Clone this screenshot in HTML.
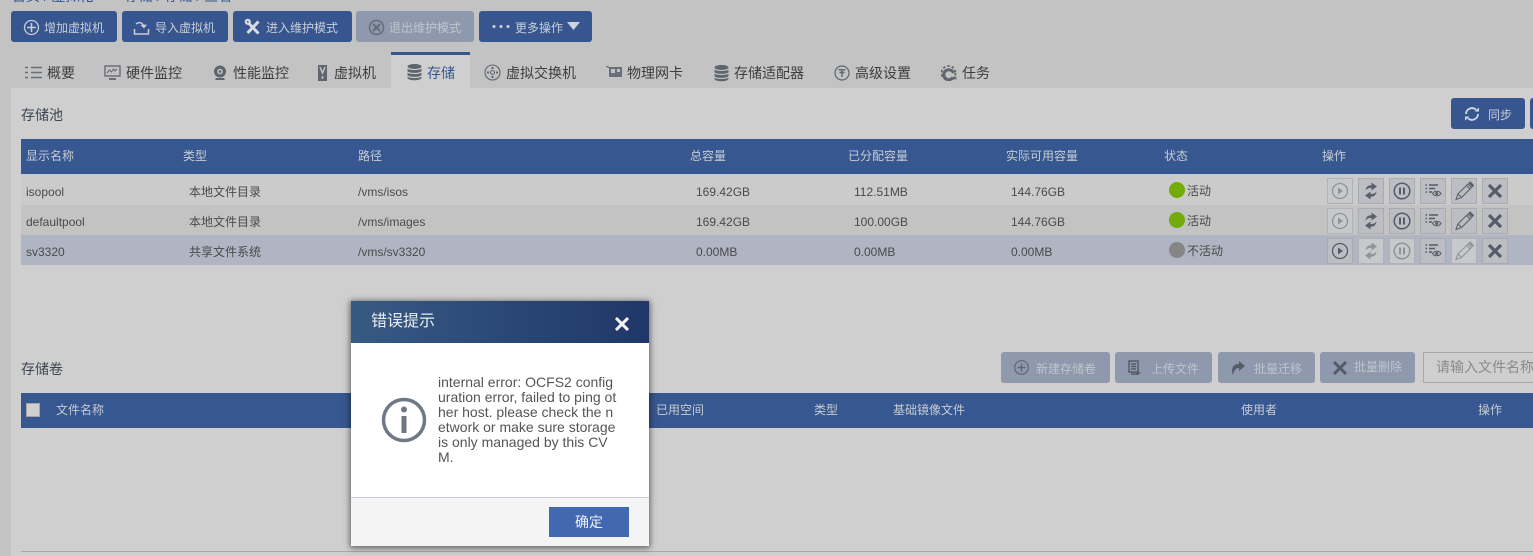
<!DOCTYPE html>
<html lang="zh"><head><meta charset="utf-8"><title>存储</title>
<style>
html,body{margin:0;padding:0}
body{width:1533px;height:556px;overflow:hidden;position:relative;background:#c3c3c3;font-family:"Liberation Sans","Noto Sans CJK SC",sans-serif;font-size:12px;color:#4a4a4a}
div,span,svg{position:absolute;box-sizing:border-box}
.t{white-space:nowrap;line-height:16px}
.btn{background:#37568f;border-radius:3px;height:31px;top:11px}
.btn.d{background:#8e99ad}
.bl{color:#c8ced9;font-size:12px}
.tab{font-size:14px;color:#3d3d3d;top:65px}
.th{color:#c8ccd4;font-size:12px;font-weight:400}
.ab{width:26px;height:26px;border:1px solid #a9abaf;background:#bcbec3}
.ab.l{background:#c8c9cb;border-color:#b0b2b5}
.ab svg{left:0;top:0;width:24px;height:24px}
.off{opacity:.5}
</style></head><body>
<div class="t" style="left:12px;top:-12px;color:#37568f;font-size:14px">首页 / 虚拟化 &nbsp;&nbsp;&nbsp;&nbsp;&nbsp;&nbsp;&nbsp;存储 / 存储 / 查看</div>

<div class="btn" style="left:11px;width:106px"></div>
<svg style="left:23px;top:19px" width="17" height="17" viewBox="0 0 17 17" fill="none" stroke="#c8ced9" stroke-width="1.3"><circle cx="8.5" cy="8.5" r="7"/><path d="M8.5 4v9M4 8.5h9" stroke-width="1.6"/></svg>
<div class="t bl" style="left:44px;top:20px">增加虚拟机</div>

<div class="btn" style="left:122px;width:106px"></div>
<svg style="left:133px;top:19px" width="17" height="17" viewBox="0 0 17 17" fill="none" stroke="#c8ced9" stroke-width="1.5"><path d="M1.5 10v5h14v-5M3 5c3-2.500 6-1.500 7.500 1.500"/><path d="M7.500 6l3.500 3.500 3-4z" fill="#c8ced9" stroke="none"/></svg>
<div class="t bl" style="left:155px;top:20px">导入虚拟机</div>

<div class="btn" style="left:233px;width:119px"></div>
<svg style="left:244px;top:18px" width="18" height="18" viewBox="0 0 18 18" fill="none" stroke="#d8dce3" stroke-width="3"><path d="M4.500 5l10 10.500M14.500 3.500L3.500 15"/><circle cx="3.800" cy="3.800" r="2" stroke-width="2.200"/></svg>
<div class="t bl" style="left:266px;top:20px">进入维护模式</div>

<div class="btn d" style="left:356px;width:118px"></div>
<svg style="left:368px;top:19px" width="17" height="17" viewBox="0 0 17 17" fill="none" stroke="#666d7a" stroke-width="1.500"><circle cx="8.500" cy="8.500" r="7"/><path d="M5 5l7 7M12 5l-7 7" stroke-width="2.200"/></svg>
<div class="t" style="left:389px;top:20px;color:#bfc4cd">退出维护模式</div>

<div class="btn" style="left:479px;width:113px"></div>
<svg style="left:491px;top:24px" width="20" height="5" viewBox="0 0 20 5" fill="#d0d5dd"><circle cx="3" cy="2.500" r="1.500"/><circle cx="10" cy="2.500" r="1.500"/><circle cx="17" cy="2.500" r="1.500"/></svg>
<div class="t bl" style="left:515px;top:20px">更多操作</div>
<svg style="left:567px;top:22px" width="13" height="8" viewBox="0 0 13 8" fill="#d0d5dd"><path d="M0 0h13L6.500 8z"/></svg>

<!-- tabs -->
<div style="left:391px;top:52px;width:79px;height:36px;background:#cfcfcf;border-top:3px solid #37568f"></div>
<svg style="left:25px;top:66px" width="17" height="13" viewBox="0 0 17 13" stroke="#6a7079" stroke-width="1.500" fill="none"><path d="M0 1.500h3M6 1.500h11M0 6.500h3M6 6.500h11M0 11.500h3M6 11.500h11"/></svg>
<div class="t tab" style="left:47px">概要</div>
<svg style="left:104px;top:65px" width="17" height="16" viewBox="0 0 17 16" fill="none" stroke="#5f656f" stroke-width="1.300"><rect x="1" y="1" width="15" height="10"/><path d="M3 8l2.500-3 2 2 2-3 1.500 2 2-2" stroke-width="1"/><path d="M5 14h7" stroke-width="1.800"/></svg>
<div class="t tab" style="left:126px">硬件监控</div>
<svg style="left:213px;top:65px" width="14" height="16" viewBox="0 0 14 16"><circle cx="7" cy="6.500" r="6" fill="#5f656f"/><circle cx="7" cy="6.500" r="2.800" fill="#c3c3c3"/><circle cx="7" cy="6.500" r="1.300" fill="#5f656f"/><path d="M2.500 13h9v2h-9z" fill="#5f656f"/></svg>
<div class="t tab" style="left:233px">性能监控</div>
<svg style="left:318px;top:65px" width="9" height="16" viewBox="0 0 9 16"><rect width="9" height="16" fill="#5f656f"/><path d="M2 2l2.500 6L7 2" fill="none" stroke="#c3c3c3" stroke-width="1.500"/><circle cx="4.500" cy="12.500" r="1.200" fill="#c3c3c3"/></svg>
<div class="t tab" style="left:334px">虚拟机</div>
<svg style="left:407px;top:64px" width="15" height="17" viewBox="0 0 15 17" fill="#5f656f"><ellipse cx="7.500" cy="2.500" rx="7" ry="2.500"/><path d="M.5 4.500c1 2 13 2 14 0v2.500c-1 2.500-13 2.500-14 0zM.5 8.500c1 2 13 2 14 0V11c-1 2.500-13 2.500-14 0zM.5 12.500c1 2 13 2 14 0V14c-1 3-13 3-14 0z"/></svg>
<div class="t tab" style="left:427px;color:#37568f">存储</div>
<svg style="left:484px;top:64px" width="17" height="17" viewBox="0 0 17 17" fill="none" stroke="#5f656f" stroke-width="1.100"><circle cx="8.500" cy="8.500" r="7.500"/><circle cx="8.500" cy="8.500" r="2"/><path d="M8.500 3v2M8.500 12v2M3 8.500h2M12 8.500h2" stroke-width="2"/></svg>
<div class="t tab" style="left:506px">虚拟交换机</div>
<svg style="left:606px;top:66px" width="16" height="13" viewBox="0 0 16 13"><path d="M0 0h2l1 1h13v10H3V2H2L1 1H0z" fill="#6a7079"/><rect x="5" y="3" width="4" height="4" fill="#c3c3c3"/><rect x="11" y="3" width="3" height="3" fill="#c3c3c3"/></svg>
<div class="t tab" style="left:627px">物理网卡</div>
<svg style="left:714px;top:65px" width="15" height="17" viewBox="0 0 15 17" fill="#5f656f"><ellipse cx="7.500" cy="2.500" rx="7" ry="2.500"/><path d="M.5 4.500c1 2 13 2 14 0v2.500c-1 2.500-13 2.500-14 0zM.5 8.500c1 2 13 2 14 0V11c-1 2.500-13 2.500-14 0zM.5 12.500c1 2 13 2 14 0V14c-1 3-13 3-14 0z"/></svg>
<div class="t tab" style="left:734px">存储适配器</div>
<svg style="left:834px;top:65px" width="16" height="16" viewBox="0 0 16 16" fill="none" stroke="#5f656f" stroke-width="1.200"><circle cx="8" cy="8" r="7"/><path d="M4.500 4.800h7M5.500 7.500h5M8 5v7" stroke-width="1.400"/></svg>
<div class="t tab" style="left:855px">高级设置</div>
<svg style="left:941px;top:65px" width="17" height="16" viewBox="0 0 17 16" fill="none" stroke="#5f656f"><path d="M12 12.500A5 5 0 1 1 12.500 8" stroke-width="3"/><circle cx="7.500" cy="8" r="7" stroke-width="1.800" stroke-dasharray="2.500 2"/><path d="M12.500 11.500l3 3M15.500 11.500l-3 3" stroke-width="1"/></svg>
<div class="t tab" style="left:962px">任务</div>

<!-- main panel -->
<div style="left:11px;top:88px;width:1522px;height:468px;background:#cfcfcf"></div>
<div class="t" style="left:21px;top:107px;color:#3d4550;font-size:14px">存储池</div>

<div class="btn" style="left:1451px;top:98px;width:74px"></div>
<div class="btn" style="left:1530px;top:98px;width:10px"></div>
<svg style="left:1464px;top:106px" width="16" height="16" viewBox="0 0 16 16" fill="none" stroke="#d3d8e0" stroke-width="1.800"><path d="M2 8a6 6 0 0 1 10-4.300M14 8a6 6 0 0 1-10 4.300"/><path d="M10.500 5.500H15V1.500zM5.500 10.500H1v4z" fill="#d3d8e0" stroke="none"/></svg>
<div class="t bl" style="left:1488px;top:107px">同步</div>

<!-- table 1 -->
<div style="left:21px;top:139px;width:1512px;height:35px;background:#36578f"></div>
<div class="t th" style="left:26px;top:148px">显示名称</div>
<div class="t th" style="left:183px;top:148px">类型</div>
<div class="t th" style="left:358px;top:148px">路径</div>
<div class="t th" style="left:690px;top:148px">总容量</div>
<div class="t th" style="left:848px;top:148px">已分配容量</div>
<div class="t th" style="left:1006px;top:148px">实际可用容量</div>
<div class="t th" style="left:1164px;top:148px">状态</div>
<div class="t th" style="left:1322px;top:148px">操作</div>

<div style="left:21px;top:174px;width:1512px;height:31px;background:#cbcbcb"></div>
<div style="left:21px;top:205px;width:1512px;height:30px;background:#c3c3c3"></div>
<div style="left:21px;top:235px;width:1512px;height:30px;background:#afb5c2"></div>

<div class="t" style="left:26px;top:184px">isopool</div>
<div class="t" style="left:189px;top:184px">本地文件目录</div>
<div class="t" style="left:358px;top:184px">/vms/isos</div>
<div class="t" style="left:696px;top:184px">169.42GB</div>
<div class="t" style="left:854px;top:184px">112.51MB</div>
<div class="t" style="left:1011px;top:184px">144.76GB</div>
<div style="left:1169px;top:182px;width:16px;height:16px;border-radius:50%;background:#73ab0a"></div>
<div class="t" style="left:1187px;top:183px">活动</div>

<div class="t" style="left:26px;top:214px">defaultpool</div>
<div class="t" style="left:189px;top:214px">本地文件目录</div>
<div class="t" style="left:358px;top:214px">/vms/images</div>
<div class="t" style="left:696px;top:214px">169.42GB</div>
<div class="t" style="left:854px;top:214px">100.00GB</div>
<div class="t" style="left:1011px;top:214px">144.76GB</div>
<div style="left:1169px;top:212px;width:16px;height:16px;border-radius:50%;background:#73ab0a"></div>
<div class="t" style="left:1187px;top:213px">活动</div>

<div class="t" style="left:26px;top:244px">sv3320</div>
<div class="t" style="left:189px;top:244px">共享文件系统</div>
<div class="t" style="left:358px;top:244px">/vms/sv3320</div>
<div class="t" style="left:696px;top:244px">0.00MB</div>
<div class="t" style="left:854px;top:244px">0.00MB</div>
<div class="t" style="left:1011px;top:244px">0.00MB</div>
<div style="left:1169px;top:242px;width:16px;height:16px;border-radius:50%;background:#858585"></div>
<div class="t" style="left:1187px;top:243px">不活动</div>

<!-- icon defs -->
<svg width="0" height="0" style="left:0;top:0"><defs>
<g id="play" fill="none" stroke="#555c68"><circle cx="12" cy="12" r="7.500" stroke-width="1.300"/><path d="M10 8.500l5 3.500-5 3.500z" fill="#555c68" stroke="none"/></g>
<g id="sync" fill="#5a616c"><path d="M6.500 11.500C7 7.500 9.500 6 12.500 6.300V3.500L18 7.500l-5.500 4V9C10 8.800 8 9.500 6.500 11.500z"/><path d="M17.500 12.500C17 16.500 14.500 18 11.500 17.700v2.800L6 16.500l5.500-4V15c2.500.2 4.500-.5 6-2.500z"/></g>
<g id="pause" fill="none" stroke="#555c68"><circle cx="12" cy="12" r="7.800" stroke-width="1.500"/><path d="M10 8.500v7M14 8.500v7" stroke-width="2"/></g>
<g id="list" fill="none" stroke="#555c68"><path d="M4.500 6h1.500M8 6h9M4.500 9.500h1.500M8 9.500h6M4.500 13h1.500M8 13h3" stroke-width="1.500"/><path d="M11.500 14.500c2-3 6.500-3 8.500 0-2 3-6.500 3-8.500 0z" stroke-width="1.100"/><circle cx="15.700" cy="14.500" r="1.500" fill="#555c68" stroke="none"/></g>
<g id="pen" fill="none" stroke="#5a616c" stroke-width="1.100"><path d="M4 20.500l1.800-5.500L16 5l3.500 3.500L9.500 18.500z"/><path d="M6 15l3.500 3.500M14.500 6.500L18 10"/><path d="M17 4l3.500 3.500 .9-1.200L18.200 3z" fill="#5a616c"/></g>
<g id="x" stroke="#555c68" stroke-width="3.200" fill="none"><path d="M6 6l12 12M18 6L6 18"/></g>
</defs></svg>

<div class="ab l" style="left:1327px;top:178px"><svg viewBox="0 0 24 24" class="off"><use href="#play"/></svg></div>
<div class="ab" style="left:1358px;top:178px"><svg viewBox="0 0 24 24"><use href="#sync"/></svg></div>
<div class="ab" style="left:1389px;top:178px"><svg viewBox="0 0 24 24"><use href="#pause"/></svg></div>
<div class="ab" style="left:1420px;top:178px"><svg viewBox="0 0 24 24"><use href="#list"/></svg></div>
<div class="ab" style="left:1451px;top:178px"><svg viewBox="0 0 24 24"><use href="#pen"/></svg></div>
<div class="ab" style="left:1482px;top:178px"><svg viewBox="0 0 24 24"><use href="#x"/></svg></div>

<div class="ab l" style="left:1327px;top:208px"><svg viewBox="0 0 24 24" class="off"><use href="#play"/></svg></div>
<div class="ab" style="left:1358px;top:208px"><svg viewBox="0 0 24 24"><use href="#sync"/></svg></div>
<div class="ab" style="left:1389px;top:208px"><svg viewBox="0 0 24 24"><use href="#pause"/></svg></div>
<div class="ab" style="left:1420px;top:208px"><svg viewBox="0 0 24 24"><use href="#list"/></svg></div>
<div class="ab" style="left:1451px;top:208px"><svg viewBox="0 0 24 24"><use href="#pen"/></svg></div>
<div class="ab" style="left:1482px;top:208px"><svg viewBox="0 0 24 24"><use href="#x"/></svg></div>

<div class="ab" style="left:1327px;top:238px"><svg viewBox="0 0 24 24"><use href="#play"/></svg></div>
<div class="ab l" style="left:1358px;top:238px"><svg viewBox="0 0 24 24" class="off"><use href="#sync"/></svg></div>
<div class="ab l" style="left:1389px;top:238px"><svg viewBox="0 0 24 24" class="off"><use href="#pause"/></svg></div>
<div class="ab" style="left:1420px;top:238px"><svg viewBox="0 0 24 24"><use href="#list"/></svg></div>
<div class="ab l" style="left:1451px;top:238px"><svg viewBox="0 0 24 24" class="off"><use href="#pen"/></svg></div>
<div class="ab" style="left:1482px;top:238px"><svg viewBox="0 0 24 24"><use href="#x"/></svg></div>

<!-- volume section -->
<div class="t" style="left:21px;top:361px;color:#3d4550;font-size:14px">存储卷</div>

<div class="btn d" style="left:1001px;top:352px;width:109px"></div>
<svg style="left:1014px;top:360px" width="15" height="15" viewBox="0 0 15 15" fill="none" stroke="#5e6674" stroke-width="1.200"><circle cx="7.500" cy="7.500" r="6.800"/><path d="M7.500 3.500v8M3.500 7.500h8" stroke-width="1.400"/></svg>
<div class="t" style="left:1036px;top:361px;color:#bfc4cd">新建存储卷</div>

<div class="btn d" style="left:1115px;top:352px;width:97px"></div>
<svg style="left:1128px;top:360px" width="14" height="16" viewBox="0 0 14 16" fill="none" stroke="#555c68" stroke-width="1.500"><path d="M1 1h9v11H1zM3 4h5M3 6.500h5M3 9h5M3 14h7"/><path d="M10 11v4M8.500 13h4" stroke-width="1.300"/></svg>
<div class="t" style="left:1151px;top:361px;color:#bfc4cd">上传文件</div>

<div class="btn d" style="left:1218px;top:352px;width:97px"></div>
<svg style="left:1231px;top:361px" width="14" height="14" viewBox="0 0 14 14" fill="#555c68"><path d="M8 0l6 5-6 5V7C5 7 3 9 2 14 0 9 1 3 8 3z"/></svg>
<div class="t" style="left:1254px;top:361px;color:#bfc4cd">批量迁移</div>

<div class="btn d" style="left:1320px;top:352px;width:95px"></div>
<svg style="left:1333px;top:361px" width="14" height="14" viewBox="0 0 14 14" stroke="#555c68" stroke-width="3" fill="none"><path d="M1 1l12 12M13 1L1 13"/></svg>
<div class="t" style="left:1354px;top:359px;color:#bfc4cd">批量删除</div>

<div style="left:1423px;top:352px;width:120px;height:31px;border:1px solid #a9a9a9;background:#cfcfcf"></div>
<div class="t" style="left:1436px;top:359px;font-size:14px;color:#8a8a8a">请输入文件名称</div>

<div style="left:21px;top:393px;width:1512px;height:35px;background:#36578f"></div>
<div style="left:26px;top:403px;width:14px;height:14px;background:#cfcfcf;border:1px solid #a5a5a5"></div>
<div class="t th" style="left:56px;top:402px">文件名称</div>
<div class="t th" style="left:656px;top:402px">已用空间</div>
<div class="t th" style="left:814px;top:402px">类型</div>
<div class="t th" style="left:893px;top:402px">基础镜像文件</div>
<div class="t th" style="left:1241px;top:402px">使用者</div>
<div class="t th" style="left:1478px;top:402px">操作</div>

<div style="left:21px;top:551px;width:1512px;height:1px;background:#a9a9a9"></div>

<!-- modal -->
<div style="left:351px;top:301px;width:298px;height:245px;background:#fff;box-shadow:0 1px 6px 1px rgba(0,0,0,.55)">
  <div style="left:0;top:0;width:298px;height:42px;background:linear-gradient(90deg,#375a83,#1f3768)"></div>
  <div class="t" style="left:20px;top:12px;font-size:16px;line-height:18px;color:#e9edf3">错误提示</div>
  <svg style="left:264px;top:16px" width="14" height="14" viewBox="0 0 14 14" stroke="#f2f4f7" stroke-width="3" fill="none"><path d="M1 1l12 12M13 1L1 13"/></svg>
  <svg style="left:30px;top:96px" width="46" height="46" viewBox="0 0 46 46"><circle cx="23" cy="23" r="20.500" fill="none" stroke="#6f7985" stroke-width="3.500"/><circle cx="23" cy="12.500" r="3" fill="#6f7985"/><rect x="20.500" y="19" width="5" height="17" fill="#6f7985"/></svg>
  <div class="t" style="left:87px;top:74px;font-size:14px;line-height:15px;color:#555">internal error: OCFS2 config<br>uration error, failed to ping ot<br>her host. please check the n<br>etwork or make sure storage<br>is only managed by this CV<br>M.</div>
  <div style="left:0;top:196px;width:298px;height:49px;background:#f4f4f5;border-top:1px solid #cfcbdc"></div>
  <div style="left:198px;top:206px;width:80px;height:30px;background:#4168b0"></div>
  <div class="t" style="left:198px;top:213px;width:80px;text-align:center;color:#eef1f6;font-size:14px">确定</div>
</div>
</body></html>
